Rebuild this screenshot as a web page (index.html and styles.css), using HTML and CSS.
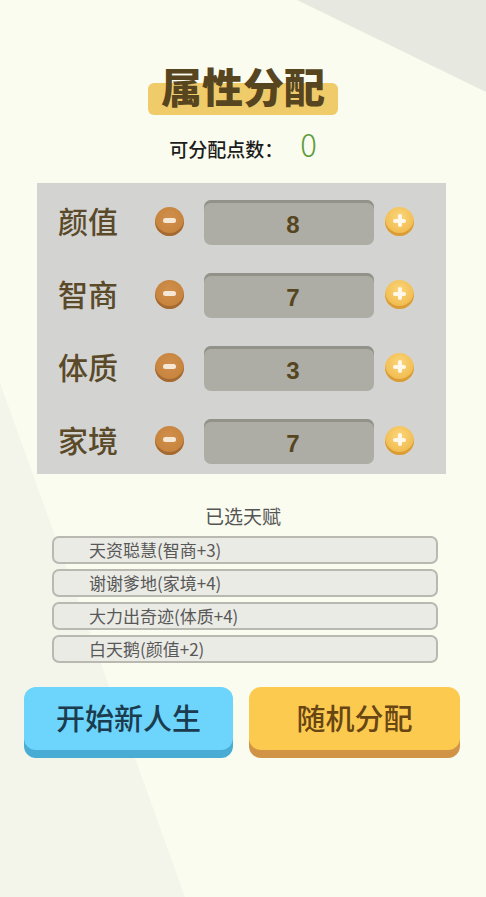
FILE: index.html
```html
<!DOCTYPE html>
<html lang="zh-CN">
<head>
<meta charset="utf-8">
<title>属性分配</title>
<link rel="stylesheet" href="styles.css">
</head>
<body>
<div class="page">
  <svg class="bg" width="486" height="897" viewBox="0 0 486 897" aria-hidden="true">
    <polygon points="297,0 486,0 486,92" fill="#e7e9e0"/>
    <polygon points="0,383 185,897 0,897" fill="#f3f5ea"/>
  </svg>
  <main class="content">
    <h1 class="title">属性分配</h1>
    <div class="points"><span class="points-label">可分配点数：</span><span class="points-value">0</span></div>

    <section class="panel">
      <div class="attr">
        <span class="attr-name">颜值</span>
        <span class="btn-minus"><i></i></span>
        <span class="attr-value">8</span>
        <span class="btn-plus"><i></i><b></b></span>
      </div>
      <div class="attr">
        <span class="attr-name">智商</span>
        <span class="btn-minus"><i></i></span>
        <span class="attr-value">7</span>
        <span class="btn-plus"><i></i><b></b></span>
      </div>
      <div class="attr">
        <span class="attr-name">体质</span>
        <span class="btn-minus"><i></i></span>
        <span class="attr-value">3</span>
        <span class="btn-plus"><i></i><b></b></span>
      </div>
      <div class="attr">
        <span class="attr-name">家境</span>
        <span class="btn-minus"><i></i></span>
        <span class="attr-value">7</span>
        <span class="btn-plus"><i></i><b></b></span>
      </div>
    </section>

    <h2 class="talent-title">已选天赋</h2>
    <ul class="talents">
      <li>天资聪慧(智商+3)</li>
      <li>谢谢爹地(家境+4)</li>
      <li>大力出奇迹(体质+4)</li>
      <li>白天鹅(颜值+2)</li>
    </ul>

    <div class="actions">
      <div class="btn btn-blue">开始新人生</div>
      <div class="btn btn-yellow">随机分配</div>
    </div>
  </main>
</div>
</body>
</html>
```
FILE: styles.css
```css
* { box-sizing: border-box; }
html, body { margin: 0; padding: 0; }
body {
  background: #fafcf0;
  font-family: "Noto Sans CJK SC", "Noto Sans", sans-serif;
}
.page {
  position: relative;
  width: 486px;
  height: 897px;
  overflow: hidden;
  background: #fafcf0;
}
.bg {
  position: absolute;
  left: 0;
  top: 0;
}
.content {
  position: relative;
  display: flex;
  flex-direction: column;
  align-items: center;
}
.title {
  position: relative;
  z-index: 0;
  margin: 65px 0 0;
  padding: 0 13px;
  font-size: 41px;
  line-height: 41px;
  font-weight: 900;
  color: #574520;
  letter-spacing: 0;
}
.title::before {
  content: "";
  position: absolute;
  z-index: -1;
  left: 0;
  right: 0;
  top: 18px;
  height: 32px;
  background: #efcb6a;
  border-radius: 6px;
}
.points {
  margin-top: 23px;
  display: flex;
  align-items: baseline;
  height: 30px;
}
.points-label {
  font-size: 19px;
  line-height: 30px;
  color: #1c1c1c;
  font-weight: 500;
}
.points-value {
  margin-left: 17px;
  font-size: 31px;
  line-height: 30px;
  font-weight: 300;
  color: #5e9c3a;
}
.panel {
  margin-top: 24px;
  align-self: flex-start;
  margin-left: 37px;
  width: 409px;
  background: #d3d3d2;
  padding: 17px 0 10px;
  display: grid;
  row-gap: 28px;
}
.attr {
  display: flex;
  align-items: center;
  height: 45px;
}
.attr-name {
  margin-left: 21px;
  width: 62px;
  font-size: 30px;
  line-height: 45px;
  padding-bottom: 4px;
  font-weight: 500;
  color: #5a4a29;
}
.btn-minus, .btn-plus {
  position: relative;
  width: 29px;
  height: 29px;
  border-radius: 50%;
  flex: none;
  margin-bottom: 3px;
}
.btn-minus {
  margin-left: 35px;
  background: radial-gradient(circle at 50% 40%, #d08f4c 0%, #c7853f 60%, #b87735 100%);
  box-shadow: inset 0 -3px 0 #a56a31;
}
.btn-minus i {
  position: absolute;
  left: 8px;
  top: 11px;
  width: 13px;
  height: 5px;
  border-radius: 3px;
  background: #f6e8d6;
}
.btn-plus {
  margin-left: 11px;
  background: radial-gradient(circle at 50% 35%, #fbd67c 0%, #f3c158 55%, #e9ae3f 100%);
  box-shadow: inset 0 -3px 0 #d99c37;
}
.btn-plus i {
  position: absolute;
  left: 8px;
  top: 12px;
  width: 13px;
  height: 4px;
  border-radius: 2px;
  background: #fff8e8;
}
.btn-plus b {
  position: absolute;
  left: 12.5px;
  top: 7.5px;
  width: 4px;
  height: 13px;
  border-radius: 2px;
  background: #fff8e8;
}
.attr-value {
  margin-left: 20px;
  width: 170px;
  height: 45px;
  border-radius: 7px;
  background: #adada5;
  box-shadow: inset 0 3px 0 #92928a;
  display: flex;
  align-items: center;
  justify-content: center;
  padding: 4px 0 0 8px;
  font-family: "Liberation Sans", "Noto Sans", sans-serif;
  font-size: 24px;
  font-weight: 700;
  color: #56461f;
}
.talent-title {
  margin: 30px 0 0;
  font-size: 19px;
  line-height: 24px;
  font-weight: 400;
  color: #555555;
}
.talents {
  list-style: none;
  margin: 8px 0 0;
  padding: 0;
  width: 386px;
  align-self: flex-start;
  margin-left: 52px;
  display: flex;
  flex-direction: column;
  gap: 5px;
}
.talents li {
  height: 28px;
  border: 2px solid #b9b9b2;
  border-radius: 7px;
  background: #ebebe6;
  padding-left: 35px;
  font-size: 17px;
  line-height: 24px;
  color: #585858;
}
.actions {
  align-self: flex-start;
  margin: 24px 0 0 24px;
  display: flex;
  gap: 16px;
}
.btn {
  height: 63px;
  border-radius: 12px;
  display: flex;
  align-items: center;
  justify-content: center;
  font-size: 29px;
  line-height: 1;
  font-weight: 500;
  padding-bottom: 2px;
}
.btn-blue {
  width: 209px;
  background: #6dd4fb;
  box-shadow: 0 8px 0 #48acd5;
  color: #1b3b4e;
}
.btn-yellow {
  width: 211px;
  background: #fdca50;
  box-shadow: 0 8px 0 #d19346;
  color: #684614;
}
```
